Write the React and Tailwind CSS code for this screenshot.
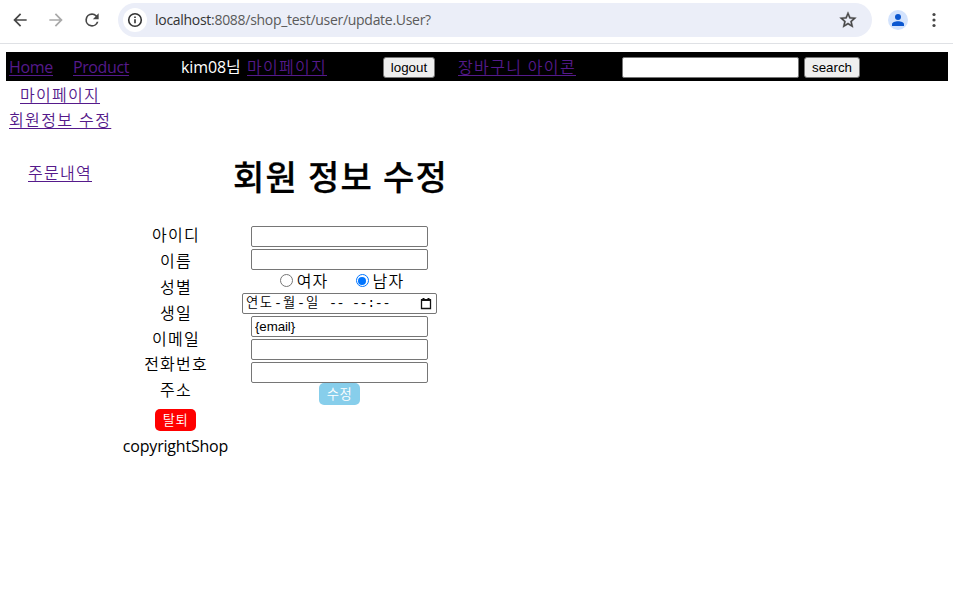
import React from 'react';

const visited = 'text-[#551a8b] underline underline-offset-[2px] decoration-1 whitespace-nowrap block';
const inputBox = 'block w-[177px] h-[21px] rounded-[2px] border border-[#767676] bg-white px-[3px] text-[13.33px] text-black outline-none font-["Liberation_Sans",sans-serif] font-normal';
const grayButton = 'h-[21px] rounded-[3px] border border-[#767676] bg-[#efefef] text-[13.33px] leading-[19px] text-black text-center whitespace-nowrap font-["Liberation_Sans",sans-serif]';

function Toolbar() {
  return (
    <header className="flex h-[44px] items-start border-b border-[#dfe1e5] bg-white pt-[3px]">
      <div className="flex h-[34px] items-center">
        <svg className="ml-[10px] h-5 w-5" viewBox="0 -960 960 960" fill="#474747">
          <path d="m313-440 224 224-57 56-320-320 320-320 57 56-224 224h487v80H313Z" />
        </svg>
        <svg className="ml-[16px] h-5 w-5" viewBox="0 -960 960 960" fill="#a9a9a9">
          <path d="M647-440H160v-80h487L423-744l57-56 320 320-320 320-57-56 224-224Z" />
        </svg>
        <svg className="ml-[16px] h-5 w-5" viewBox="0 0 24 24" fill="#474747">
          <path d="M17.65 6.35A7.96 7.96 0 0 0 12 4a8 8 0 1 0 7.73 10h-2.08A6 6 0 1 1 12 6c1.66 0 3.14.69 4.22 1.78L13 11h7V4l-2.35 2.35z" />
        </svg>
      </div>
      <div className="ml-[16px] flex h-[34px] w-[754px] items-center rounded-full bg-[#ebeef8] pl-[5px]">
        <div className="flex h-6 w-6 items-center justify-center rounded-full bg-white">
          <svg className="h-4 w-4" viewBox="0 0 16 16" fill="none" stroke="#333" strokeWidth="1.6">
            <circle cx="8" cy="8" r="6.3" />
            <path d="M8 7.2v4M8 4.4v1.6" />
          </svg>
        </div>
        <span className="ml-[8px] w-[277px] whitespace-nowrap font-['Open_Sans',sans-serif] text-[14px] font-normal leading-[20px] tracking-[-0.29px] text-[#5a5a5a]">
          <span className="text-[#333]">localhost</span>:8088/shop_test/user/update.User?
        </span>
        <svg className="ml-[406px] h-5 w-5" viewBox="0 0 24 24" fill="#474747" stroke="#474747" strokeWidth="0.4">
          <path d="M22 9.24l-7.19-.62L12 2 9.19 8.63 2 9.24l5.46 4.73L5.82 21 12 17.27 18.18 21l-1.63-7.03L22 9.24zM12 15.4l-3.76 2.27 1-4.28-3.32-2.88 4.38-.38L12 6.1l1.71 4.04 4.38.38-3.32 2.88 1 4.28L12 15.4z" />
        </svg>
      </div>
      <div className="flex h-[34px] items-center">
        <div className="ml-[16px] flex h-5 w-5 items-center justify-center rounded-full bg-[#d3e3fd]">
          <svg className="h-3 w-3" viewBox="0 0 12 12" fill="#0b57d0">
            <circle cx="6" cy="3" r="3" />
            <path d="M0 12v-1.8C0 8.200 3 7.200 6 7.200s6 1 6 3V12z" />
          </svg>
        </div>
        <svg className="ml-[18px] h-4 w-4" viewBox="0 0 16 16" fill="#474747">
          <circle cx="8" cy="2.500" r="1.6" />
          <circle cx="8" cy="8" r="1.6" />
          <circle cx="8" cy="13.500" r="1.6" />
        </svg>
      </div>
    </header>
  );
}

function Nav() {
  return (
    <nav className="ml-[6px] mt-[8px] flex h-[29px] w-[942px] items-center bg-black">
      <a className={visited + ' ml-[3px] w-[44px] font-normal tracking-[-0.3px]'}>Home</a>
      <a className={visited + ' ml-[20px] w-[56px] font-normal tracking-[-0.4px]'}>Product</a>
      <span className="ml-[52px] w-[60px] whitespace-nowrap font-normal tracking-[-0.1px] text-white">kim08님</span>
      <a className={visited + ' ml-[6px] w-[80px] tracking-[1.28px]'}>마이페이지</a>
      <button className={grayButton + ' ml-[56px] mt-[2px] w-[52px]'}>logout</button>
      <a className={visited + ' ml-[23px] w-[118px] tracking-[1.35px]'}>장바구니 아이콘</a>
      <input className={inputBox + ' ml-[46px] mt-[2px]'} />
      <button className={grayButton + ' ml-[5px] mt-[2px] w-[56px]'}>search</button>
    </nav>
  );
}

function Gender({ label, checked }) {
  return (
    <label className="flex items-center gap-[4px] tracking-[1.2px]">
      <span className={checked
        ? 'flex h-[13px] w-[13px] items-center justify-center rounded-full border border-[#0075ff] bg-white'
        : 'h-[13px] w-[13px] rounded-full border border-[#767676] bg-white'}>
        {checked && <span className="h-[8px] w-[8px] rounded-full bg-[#0075ff]" />}
      </span>
      {label}
    </label>
  );
}

function DateField() {
  return (
    <div className="flex h-[21px] w-[195px] items-center rounded-[2px] border border-[#767676] bg-white pl-[3px] pr-[4px] text-[13.33px] leading-[18px]">
      <div className="flex flex-1 whitespace-pre font-['Liberation_Mono','Noto_Sans_CJK_KR',monospace]">
        <span className="w-[28px] tracking-[1.4px]">연도</span>
        <span className="w-[9px]">-</span>
        <span className="w-[14px]">월</span>
        <span className="w-[9px]">-</span>
        <span className="w-[23px]">일</span>
        <span className="w-[23px] tracking-[-0.5px]">--</span>
        <span className="tracking-[-0.4px]">--:--</span>
      </div>
      <svg className="mb-px h-[13px] w-[12px]" viewBox="0 0 12 13" fill="none" stroke="#111">
        <path d="M1.500 3h9v8.500h-9z" strokeWidth="1.3" />
        <path d="M1 3h10M3.500 1v2M8.500 1v2" strokeWidth="2" />
      </svg>
    </div>
  );
}

const labels = ['아이디', '이름', '성별', '생일', '이메일', '전화번호', '주소'];

export default function App() {
  return (
    <div className="h-[590px] w-[953px] overflow-hidden bg-white font-['Open_Sans','Noto_Sans_CJK_KR',sans-serif] text-[16px] font-[350] leading-[24px] text-black">
      <Toolbar />
      <Nav />
      <main className="flex">
        <aside className="ml-[6px] flex w-[108px] flex-col items-center pt-[2px] tracking-[1.4px]">
          <a className={visited + ' w-[80px] tracking-[1.28px]'}>마이페이지</a>
          <a className={visited + ' mt-[1px] w-[102px]'}>회원정보 수정</a>
          <a className={visited + ' mt-[29px] w-[64px] tracking-[1.28px]'}>주문내역</a>
        </aside>
        <section className="ml-[5px] flex w-[113px] flex-col items-center pt-[142px]">
          {labels.map((l) => (
            <div key={l} className="h-[25.9px] pl-px tracking-[1.2px]">{l}</div>
          ))}
          <button className="mt-[4.7px] h-[22px] w-[41px] rounded-[5px] bg-[#ff0000] text-[13.33px] font-[350] leading-[22px] tracking-[0.6px] text-white">탈퇴</button>
          <div className="mt-[3px] whitespace-nowrap font-normal tracking-[-0.2px]">copyrightShop</div>
        </section>
        <section className="ml-[10px] flex w-[195px] flex-col items-center pt-[74px]">
          <h1 className="h-[44px] w-[213px] whitespace-nowrap text-[34px] font-medium leading-[44px] tracking-[1.2px] [-webkit-text-stroke:0.3px_black]">회원 정보 수정</h1>
          <div className="mt-[27px] flex flex-col items-center gap-[2px]">
            <input className={inputBox} />
            <input className={inputBox} />
            <div className="flex h-[19px] items-center gap-[27px] pb-[2px] pl-[5px]">
              <Gender label="여자" />
              <Gender label="남자" checked />
            </div>
            <DateField />
            <input className={inputBox + ' tracking-[-0.1px]'} defaultValue="{email}" />
            <input className={inputBox} />
            <input className={inputBox} />
          </div>
          <button className="h-[22px] w-[41px] rounded-[5px] bg-[#87ceeb] text-[13.33px] font-[350] leading-[22px] tracking-[0.6px] text-white">수정</button>
        </section>
      </main>
    </div>
  );
}
